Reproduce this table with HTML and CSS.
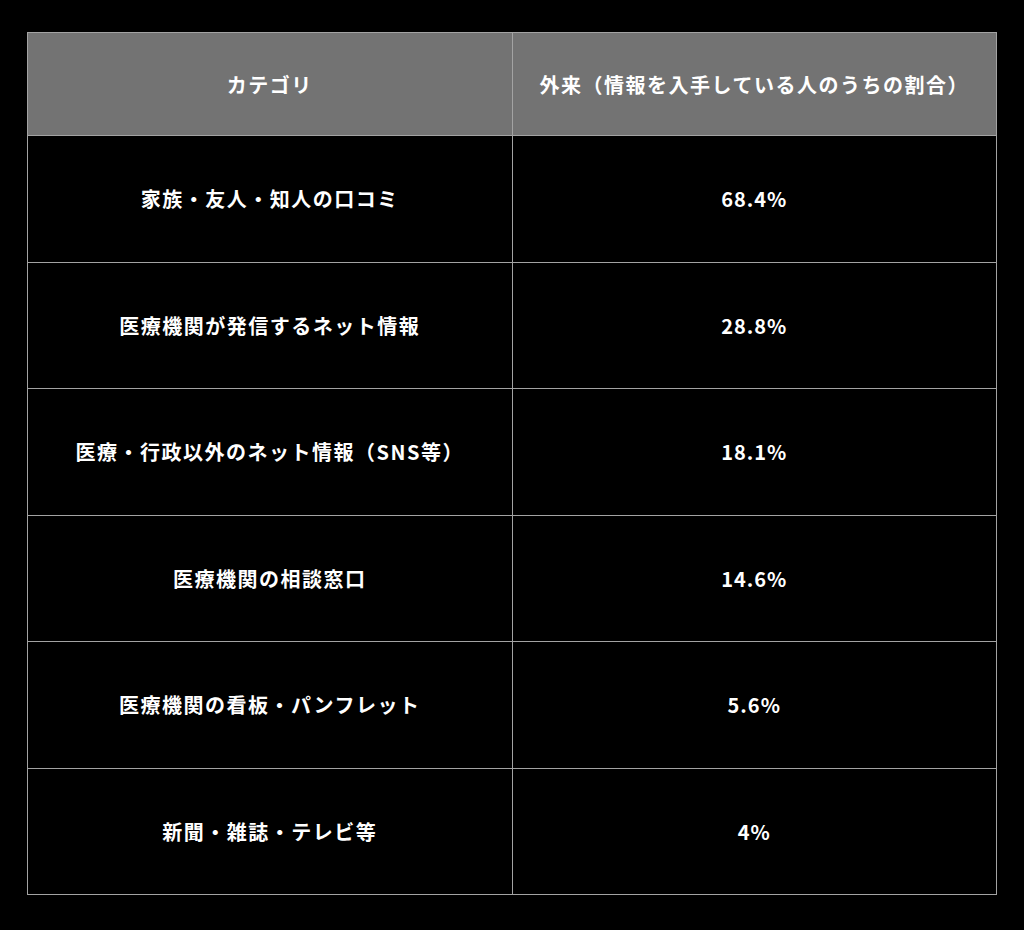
FILE: index.html
```html
<!DOCTYPE html>
<html lang="ja">
<head>
<meta charset="utf-8">
<link rel="stylesheet" href="styles.css">
</head>
<body>
<div class="wrap">
<table class="data">
  <thead>
    <tr><th>カテゴリ</th><th>外来（情報を入手している人のうちの割合）</th></tr>
  </thead>
  <tbody>
    <tr><td>家族・友人・知人の口コミ</td><td class="num">68.4%</td></tr>
    <tr><td>医療機関が発信するネット情報</td><td class="num">28.8%</td></tr>
    <tr><td>医療・行政以外のネット情報（SNS等）</td><td class="num">18.1%</td></tr>
    <tr><td>医療機関の相談窓口</td><td class="num">14.6%</td></tr>
    <tr><td>医療機関の看板・パンフレット</td><td class="num">5.6%</td></tr>
    <tr><td>新聞・雑誌・テレビ等</td><td class="num">4%</td></tr>
  </tbody>
</table>
</div>
</body>
</html>
```
FILE: styles.css
```css
html, body {
  margin: 0;
  padding: 0;
  background: #000;
}
body {
  font-family: "Noto Sans CJK JP", "Noto Sans", sans-serif;
  color: #fff;
}
.wrap {
  padding: 32px 27px 0 27px;
}
.data {
  width: 970px;
  border-collapse: collapse;
  table-layout: fixed;
}
.data th, .data td {
  border: 1px solid #a3a3a3;
  text-align: center;
  vertical-align: middle;
  font-weight: 700;
  font-size: 20px;
  letter-spacing: 1.5px;
  width: 50%;
}
.data th {
  background: #737373;
  height: 102px;
  padding: 0;
}
.data td {
  height: 125.5px;
  padding: 0;
  background: #000;
}
.data td.num {
  letter-spacing: 1px;
}
```
